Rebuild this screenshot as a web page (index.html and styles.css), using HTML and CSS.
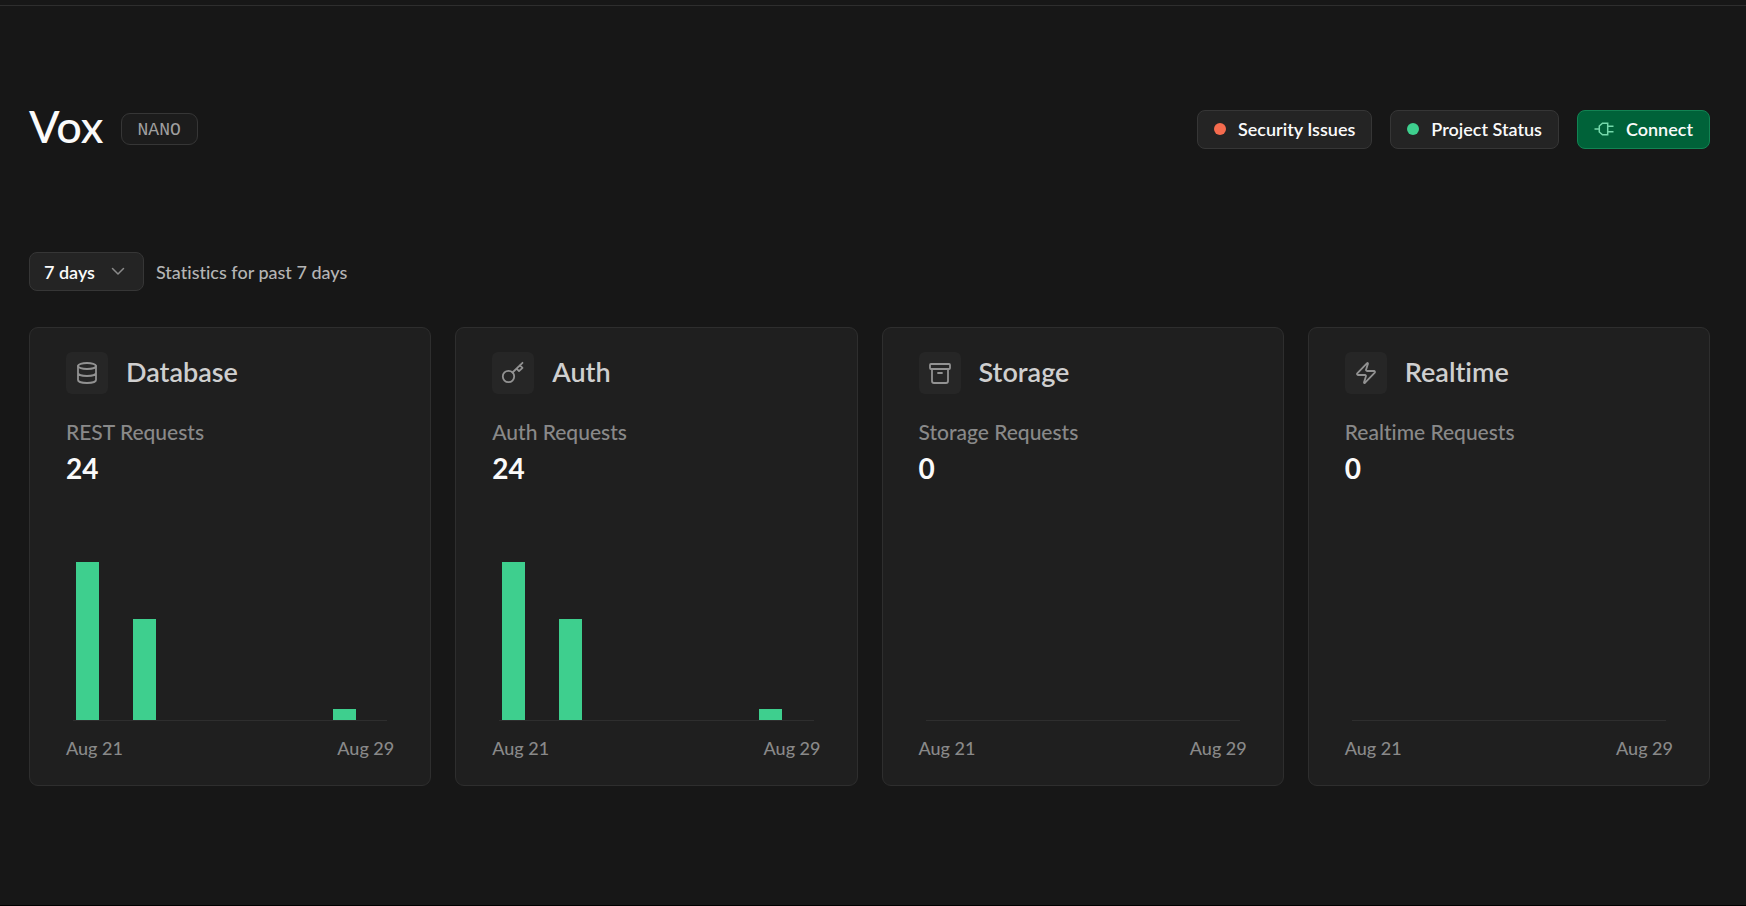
FILE: index.html
```html
<!DOCTYPE html>
<html lang="en">
<head>
<meta charset="utf-8">
<title>Vox</title>
<link rel="stylesheet" href="styles.css">
</head>
<body>
<main class="page">
  <header class="project">
    <div class="project-name">
      <h1 class="title">Vox</h1>
      <span class="badge">NANO</span>
    </div>
    <div class="actions">
      <button class="button" type="button"><span class="dot dot-alert"></span>Security Issues</button>
      <button class="button" type="button"><span class="dot dot-ok"></span>Project Status</button>
      <button class="button button-primary" type="button">
        <svg class="plug" viewBox="0 0 20 16" fill="none" stroke="currentColor" stroke-width="1.5"><path d="M0.500 8H5M13.700 2.200H8.500L5.300 5v6l3.200 2.800h5.200zM13.700 5.200H19.500M13.700 10.800H19.500"/></svg>
        Connect
      </button>
    </div>
  </header>

  <div class="filter">
    <button class="button button-range" type="button" aria-haspopup="listbox">7 days
      <svg class="chevron" viewBox="0 0 14 9" fill="none" stroke="currentColor" stroke-width="1.5" stroke-linecap="round" stroke-linejoin="round"><path d="M1.500 1.500l5.500 5.500 5.500-5.500"/></svg>
    </button>
    <span class="filter-note">Statistics for past 7 days</span>
  </div>

  <section class="cards">
    <article class="card">
      <header class="card-head">
        <span class="card-icon"><svg class="icon" viewBox="0 0 24 24"><ellipse cx="12" cy="5" rx="9" ry="3"/><path d="M3 5v14a9 3 0 0 0 18 0V5M3 12a9 3 0 0 0 18 0"/></svg></span>
        <h2 class="card-title">Database</h2>
      </header>
      <p class="metric-label">REST Requests</p>
      <p class="metric-value">24</p>
      <div class="chart">
        <span class="bar" style="height:100%"></span><span></span><span class="bar" style="height:64%"></span><span></span><span></span><span></span><span></span><span></span><span></span><span class="bar" style="height:7%"></span><span></span>
      </div>
      <div class="axis"><span>Aug 21</span><span>Aug 29</span></div>
    </article>

    <article class="card">
      <header class="card-head">
        <span class="card-icon"><svg class="icon" viewBox="0 0 24 24"><circle cx="7.500" cy="15.500" r="5.700"/><path d="M11.500 11.500L21.500 1.800M15.500 7.600l2.500 2.500 3.500-3.300-2.700-2.600"/></svg></span>
        <h2 class="card-title">Auth</h2>
      </header>
      <p class="metric-label">Auth Requests</p>
      <p class="metric-value">24</p>
      <div class="chart">
        <span class="bar" style="height:100%"></span><span></span><span class="bar" style="height:64%"></span><span></span><span></span><span></span><span></span><span></span><span></span><span class="bar" style="height:7%"></span><span></span>
      </div>
      <div class="axis"><span>Aug 21</span><span>Aug 29</span></div>
    </article>

    <article class="card">
      <header class="card-head">
        <span class="card-icon"><svg class="icon" viewBox="0 0 24 24"><rect x="2" y="3" width="20" height="5" rx="1"/><path d="M4 8v12a2 2 0 0 0 2 2h12a2 2 0 0 0 2-2V8M10 12h4"/></svg></span>
        <h2 class="card-title">Storage</h2>
      </header>
      <p class="metric-label">Storage Requests</p>
      <p class="metric-value">0</p>
      <div class="chart"></div>
      <div class="axis"><span>Aug 21</span><span>Aug 29</span></div>
    </article>

    <article class="card">
      <header class="card-head">
        <span class="card-icon"><svg class="icon" viewBox="0 0 24 24"><path d="M4 14a1 1 0 0 1-.78-1.630l9.900-10.200a.5.5 0 0 1 .86.460l-1.920 6.020A1 1 0 0 0 13 10h7a1 1 0 0 1 .78 1.630l-9.900 10.200a.5.5 0 0 1-.86-.460l1.920-6.020A1 1 0 0 0 11 14z"/></svg></span>
        <h2 class="card-title">Realtime</h2>
      </header>
      <p class="metric-label">Realtime Requests</p>
      <p class="metric-value">0</p>
      <div class="chart"></div>
      <div class="axis"><span>Aug 21</span><span>Aug 29</span></div>
    </article>
  </section>
</main>
</body>
</html>
```
FILE: styles.css
```css
*, *::before, *::after { box-sizing: border-box; }

body {
  margin: 0;
  padding-top: 5px;
  min-height: 100vh;
  display: flex;
  background: #171717;
  color: #fafafa;
  font-family: Lato, "Liberation Sans", sans-serif;
  font-size: 18px;
  line-height: 24px;
  font-weight: 500;
  font-variant-ligatures: none;
}

h1, h2, p { margin: 0; }

.page {
  flex: 1;
  padding: 96px 36px 0 29px;
  border-top: 1px solid #2e2e2e;
  border-bottom: 1px solid #000;
}

.project {
  display: flex;
  align-items: center;
  justify-content: space-between;
}

.project-name {
  display: flex;
  align-items: center;
  gap: 17px;
}

.title {
  padding-bottom: 6px;
  font-size: 45px;
  line-height: 48px;
  font-weight: 500;
}

.badge {
  padding: 2px 16px 0;
  border: 1px solid #363636;
  border-radius: 9px;
  background: #1c1c1c;
  color: #a0a0a0;
  font-family: "Liberation Mono", monospace;
  font-weight: 400;
  line-height: 28px;
}

.actions {
  display: flex;
  gap: 18px;
}

.button {
  display: flex;
  align-items: center;
  gap: 12px;
  height: 39px;
  padding: 0 16px;
  border: 1px solid #363636;
  border-radius: 8px;
  background: #242424;
  color: #fafafa;
  font: inherit;
  font-weight: 600;
}

.button-primary {
  border-color: #128353;
  background: #006239;
}

.button-range {
  gap: 16px;
  padding: 0 14px;
}

.dot {
  width: 12px;
  height: 12px;
  border-radius: 50%;
}

.dot-alert { background: #f56b4e; }
.dot-ok { background: #3ecf8e; }

.plug {
  width: 20px;
  height: 16px;
  color: #75d9ab;
}

.chevron {
  width: 14px;
  height: 9px;
  margin-right: 4px;
  color: #8a8a8a;
}

.filter {
  display: flex;
  align-items: center;
  gap: 12px;
  margin-top: 96px;
}

.filter-note { color: #b4b4b4; }

.cards {
  display: grid;
  grid-template-columns: repeat(4, 1fr);
  gap: 24px;
  margin-top: 36px;
}

.card {
  padding: 24px 36px;
  border: 1px solid #2e2e2e;
  border-radius: 9px;
  background: #1f1f1f;
}

.card-head {
  display: flex;
  align-items: center;
  gap: 18px;
}

.card-icon {
  display: grid;
  place-items: center;
  width: 42px;
  height: 42px;
  border-radius: 6px;
  background: #262626;
}

.icon {
  width: 24px;
  height: 24px;
  fill: none;
  stroke: #929292;
  stroke-width: 1.8;
  stroke-linecap: round;
  stroke-linejoin: round;
}

.card-title {
  padding-bottom: 2px;
  color: #cfcfcf;
  font-size: 27px;
  line-height: 36px;
  font-weight: 600;
}

.metric-label {
  margin-top: 23px;
  color: #898989;
  font-size: 21px;
  line-height: 30px;
}

.metric-value {
  font-size: 28px;
  line-height: 42px;
  font-weight: 700;
}

.chart {
  display: grid;
  grid-template-columns: repeat(11, 1fr);
  align-items: end;
  justify-items: center;
  height: 159px;
  margin: 73px 7px 0;
  border-bottom: 1px solid #2e2e2e;
}

.bar {
  width: 80%;
  background: #3ecf8e;
}

.axis {
  display: flex;
  justify-content: space-between;
  margin-top: 15px;
  padding-bottom: 1px;
  color: #898989;
}
```
